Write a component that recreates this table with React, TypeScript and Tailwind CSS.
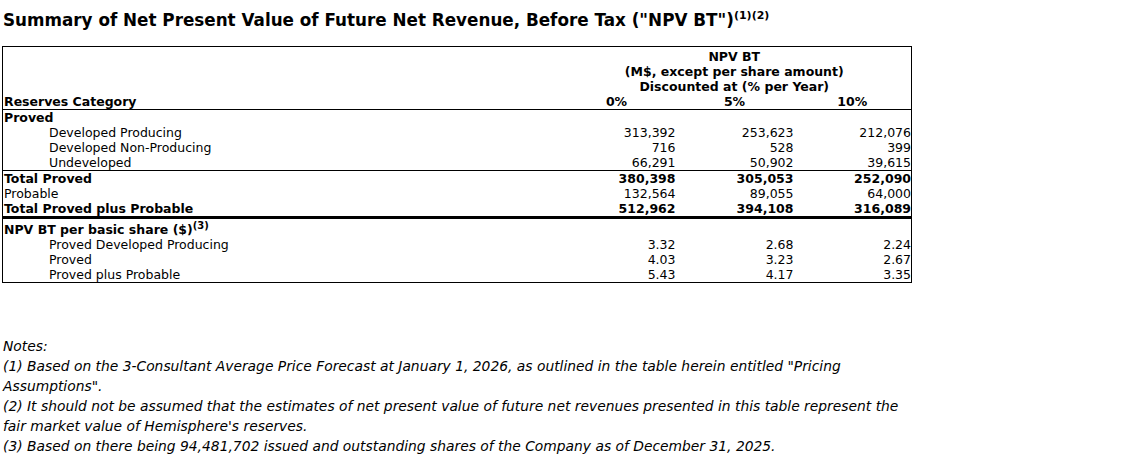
import React from "react";

type Row = {
	label: string;
	values: string[];
	kind?: "bold" | "indent" | "plain";
	lineBelow?: "thin" | "thick";
};

const reserveRows: Row[] = [
	{ label: "Developed Producing", values: ["313,392", "253,623", "212,076"], kind: "indent" },
	{ label: "Developed Non-Producing", values: ["716", "528", "399"], kind: "indent" },
	{ label: "Undeveloped", values: ["66,291", "50,902", "39,615"], kind: "indent", lineBelow: "thin" },
	{ label: "Total Proved", values: ["380,398", "305,053", "252,090"], kind: "bold" },
	{ label: "Probable", values: ["132,564", "89,055", "64,000"], kind: "plain" },
	{ label: "Total Proved plus Probable", values: ["512,962", "394,108", "316,089"], kind: "bold", lineBelow: "thick" },
];

const shareRows: Row[] = [
	{ label: "Proved Developed Producing", values: ["3.32", "2.68", "2.24"], kind: "indent" },
	{ label: "Proved", values: ["4.03", "3.23", "2.67"], kind: "indent" },
	{ label: "Proved plus Probable", values: ["5.43", "4.17", "3.35"], kind: "indent" },
];

function DataRow({ row }: { row: Row }) {
	const border =
		row.lineBelow === "thick"
			? "border-b-[3px] border-black"
			: row.lineBelow === "thin"
				? "border-b border-black"
				: "";
	const weight = row.kind === "bold" ? "font-bold" : "font-normal";
	const indent = row.kind === "indent" ? "pl-[46px]" : "pl-px";
	return (
		<tr className={`h-[15px] ${border}`}>
			<td className={`p-0 ${indent} ${weight}`}>{row.label}</td>
			{row.values.map((v, i) => (
				<td key={i} className={`p-0 text-right ${weight}`}>
					{v}
				</td>
			))}
		</tr>
	);
}

export default function App() {
	return (
		<div
			className="bg-white text-black px-[2px]"
			style={{ fontFamily: '"DejaVu Sans", Verdana, sans-serif' }}
		>
			<h1 className="mt-[10px] text-[16.8px] leading-[20px] font-bold pl-px">
				Summary of Net Present Value of Future Net Revenue, Before Tax ("NPV BT")
				<sup className="text-[11px] relative -top-[7px]">(1)(2)</sup>
			</h1>

			<table className="mt-[16px] w-[910px] table-fixed border-collapse border border-black text-[12.5px] leading-[15px]">
				<colgroup>
					<col className="w-[555px]" />
					<col className="w-[118px]" />
					<col className="w-[118px]" />
					<col className="w-[118px]" />
				</colgroup>
				<thead>
					<tr className="h-[17px]">
						<td rowSpan={4} className="p-0 pl-px align-bottom font-bold">
							Reserves Category
						</td>
						<td colSpan={3} className="p-0 text-center align-bottom font-bold">
							NPV BT
						</td>
					</tr>
					<tr className="h-[15px]">
						<td colSpan={3} className="p-0 text-center font-bold">
							(M$, except per share amount)
						</td>
					</tr>
					<tr className="h-[15px]">
						<td colSpan={3} className="p-0 text-center font-bold">
							Discounted at (% per Year)
						</td>
					</tr>
					<tr className="h-[15px] border-b border-black">
						<td className="p-0 text-center font-bold">0%</td>
						<td className="p-0 text-center font-bold">5%</td>
						<td className="p-0 text-center font-bold">10%</td>
					</tr>
				</thead>
				<tbody>
					<tr className="h-[15px]">
						<td colSpan={4} className="p-0 pl-px font-bold">
							Proved
						</td>
					</tr>
					{reserveRows.map((r) => (
						<DataRow key={r.label} row={r} />
					))}
					<tr className="h-[20px]">
						<td colSpan={4} className="p-0 pl-px font-bold align-bottom">
							NPV BT per basic share ($)
							<sup className="text-[10px] relative -top-[5px]">(3)</sup>
						</td>
					</tr>
					{shareRows.map((r) => (
						<DataRow key={r.label} row={r} />
					))}
				</tbody>
			</table>

			<div className="mt-[53px] w-[910px] text-[13.85px] leading-[20px] italic pl-px">
				<p>Notes:</p>
				<p>
					(1) Based on the 3-Consultant Average Price Forecast at January 1, 2026, as outlined in the table herein entitled "Pricing
					<br />
					Assumptions".
				</p>
				<p>
					(2) It should not be assumed that the estimates of net present value of future net revenues presented in this table represent the
					<br />
					fair market value of Hemisphere's reserves.
				</p>
				<p>(3) Based on there being 94,481,702 issued and outstanding shares of the Company as of December 31, 2025.</p>
			</div>
		</div>
	);
}
